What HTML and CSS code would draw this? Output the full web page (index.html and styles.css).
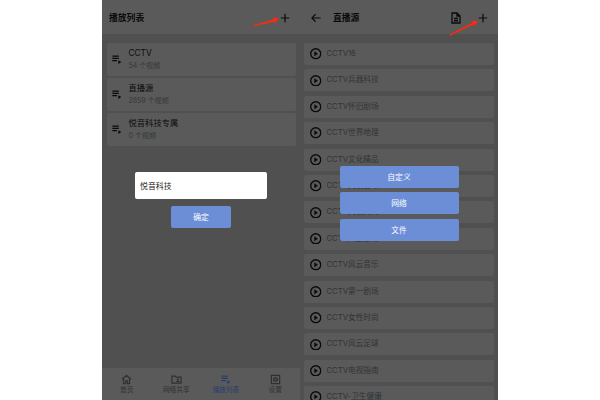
FILE: index.html
```html
<!DOCTYPE html>
<html lang="zh-CN">
<head>
    <meta charset="UTF-8">
    <title>播放列表</title>
    <link rel="stylesheet" href="styles.css">
</head>
<body>
    <svg class="sprite">
        <symbol id="queue" viewBox="0 0 24 24">
            <path d="M3 3h14v2.800H3zM3 8h14v2.800H3zM3 13h10v2.800H3zM16 13.500l6.500 4.200-6.500 4.200z"/>
        </symbol>
        <symbol id="play" viewBox="0 0 24 24">
            <circle cx="12" cy="12" r="10.500" fill="none" stroke="currentColor" stroke-width="2.800"/>
            <path d="M9 7v10l7.500-5z"/>
        </symbol>
        <symbol id="plus" viewBox="0 0 24 24">
            <path d="M10.600 2h2.800v8.600H22v2.800h-8.600V22h-2.800v-8.600H2v-2.800h8.600z"/>
        </symbol>
    </svg>

    <div class="phone">
        <div class="header">
            <h1>播放列表</h1>
            <svg class="icon-plus"><use href="#plus"/></svg>
        </div>
        <div class="playlists">
            <div class="playlist">
                <svg class="icon-queue"><use href="#queue"/></svg>
                <div>
                    <div class="name">CCTV</div>
                    <div class="count">54 个视频</div>
                </div>
            </div>
            <div class="playlist">
                <svg class="icon-queue"><use href="#queue"/></svg>
                <div>
                    <div class="name">直播源</div>
                    <div class="count">2859 个视频</div>
                </div>
            </div>
            <div class="playlist">
                <svg class="icon-queue"><use href="#queue"/></svg>
                <div>
                    <div class="name">悦音科技专属</div>
                    <div class="count">0 个视频</div>
                </div>
            </div>
        </div>
        <div class="tabs">
            <div class="tab">
                <svg viewBox="0 0 24 24"><path class="line" d="M2.500 11.500L12 3l9.500 8.500M5.500 9.500V21H10v-6h4v6h4.500V9.500"/></svg>
                <span>首页</span>
            </div>
            <div class="tab">
                <svg viewBox="0 0 24 24"><path class="line" d="M2 4.500h7l2 2.500h11v13H2z"/><circle cx="15" cy="11.500" r="2"/><path d="M11 17.500c0-4.500 8-4.500 8 0z"/></svg>
                <span>网络共享</span>
            </div>
            <div class="tab active">
                <svg><use href="#queue"/></svg>
                <span>播放列表</span>
            </div>
            <div class="tab">
                <svg viewBox="0 0 24 24"><path class="line" d="M3 3h18v18H3z"/><circle class="gear" cx="12" cy="12" r="3.200"/><path class="line" d="M12 6v2.500M12 15.500V18M6.800 9l2.200 1.300M15 13.700l2.200 1.300M6.800 15L9 13.700M15 10.300L17.200 9"/></svg>
                <span>设置</span>
            </div>
        </div>
        <div class="dialog">
            <input class="field" type="text" value="悦音科技">
            <button class="confirm">确定</button>
        </div>
        <svg class="arrow" viewBox="0 0 198 34"><path d="M151 25.300L171.500 19.500L170.800 17.700L177.300 18.300L173 23L172.200 21.700L151.200 26.400z"/></svg>
    </div>

    <div class="phone">
        <div class="header">
            <svg class="icon-back" viewBox="0 0 24 24"><path class="line" d="M23 12H3M11 3l-9 9 9 9"/></svg>
            <h1>直播源</h1>
            <svg class="icon-file" viewBox="0 0 24 24"><path class="line" d="M4 2h10l6 6v14H4zM14 2v6h6M8 13h8M8 17.500h8"/></svg>
            <svg class="icon-plus"><use href="#plus"/></svg>
        </div>
        <div class="channels">
            <div class="channel"><svg><use href="#play"/></svg><span>CCTV16</span></div>
            <div class="channel"><svg><use href="#play"/></svg><span>CCTV兵器科技</span></div>
            <div class="channel"><svg><use href="#play"/></svg><span>CCTV怀旧剧场</span></div>
            <div class="channel"><svg><use href="#play"/></svg><span>CCTV世界地理</span></div>
            <div class="channel"><svg><use href="#play"/></svg><span>CCTV文化精品</span></div>
            <div class="channel"><svg><use href="#play"/></svg><span>CCTV央视台球</span></div>
            <div class="channel"><svg><use href="#play"/></svg><span>CCTV央视高网</span></div>
            <div class="channel"><svg><use href="#play"/></svg><span>CCTV风云剧场</span></div>
            <div class="channel"><svg><use href="#play"/></svg><span>CCTV风云音乐</span></div>
            <div class="channel"><svg><use href="#play"/></svg><span>CCTV第一剧场</span></div>
            <div class="channel"><svg><use href="#play"/></svg><span>CCTV女性时尚</span></div>
            <div class="channel"><svg><use href="#play"/></svg><span>CCTV风云足球</span></div>
            <div class="channel"><svg><use href="#play"/></svg><span>CCTV电视指南</span></div>
            <div class="channel"><svg><use href="#play"/></svg><span>CCTV-卫生健康</span></div>
        </div>
        <div class="menu">
            <button>自定义</button>
            <button>网络</button>
            <button>文件</button>
        </div>
        <svg class="arrow" viewBox="0 0 198 34"><path d="M149.500 34.600L172.300 22.800L171.300 21.100L178.200 21L174 26.600L173 24.800L150 35.700z"/></svg>
    </div>
</body>
</html>
```
FILE: styles.css
```css
* {
    box-sizing: border-box;
    margin: 0;
    padding: 0;
}

body {
    display: flex;
    justify-content: center;
    height: 400px;
    overflow: hidden;
    background-color: #fff;
    font-family: Inter, "Noto Sans CJK SC", sans-serif;
    color: #0a0a0a;
}

.sprite {
    position: absolute;
    width: 0;
    height: 0;
}

svg {
    display: block;
    flex-shrink: 0;
    fill: currentColor;
}

.line {
    fill: none;
    stroke: currentColor;
    stroke-width: 2.6;
}

.phone {
    position: relative;
    display: flex;
    flex-direction: column;
    width: 198px;
    height: 400px;
    overflow: hidden;
    background-color: #505050;
}

/* top bar */
.header {
    display: flex;
    align-items: center;
    flex-shrink: 0;
    height: 34px;
    padding: 2px 10px 0 7px;
    background-color: #5a5a5a;
}

.header h1 {
    flex: 1;
    font-size: 8.8px;
    line-height: 14px;
    font-weight: 700;
}

.icon-plus {
    width: 10px;
    height: 10px;
}

.icon-back {
    width: 10px;
    height: 10px;
    margin: 0 12px 0 4px;
}

.icon-file {
    width: 12px;
    height: 12px;
    margin-right: 16px;
}

/* red pointer */
.arrow {
    position: absolute;
    top: 0;
    left: 0;
    width: 198px;
    height: 34px;
    overflow: visible;
    fill: #fc2a10;
}

/* playlists */
.playlists {
    flex: 1;
    display: flex;
    flex-direction: column;
    gap: 2.2px;
    padding: 9px 4px 0 4.5px;
}

.playlist {
    display: flex;
    align-items: center;
    height: 32.9px;
    padding-left: 4.5px;
    border-radius: 2px;
    background-color: #5a5a5a;
}

.icon-queue {
    width: 11px;
    height: 11px;
    margin-right: 6.5px;
}

.name {
    font-size: 8.3px;
    line-height: 13px;
}

.count {
    font-size: 7px;
    line-height: 12px;
    color: #34383b;
}

/* bottom tabs */
.tabs {
    display: flex;
    height: 32px;
    background-color: #5a5a5a;
}

.tab {
    flex: 1;
    display: flex;
    flex-direction: column;
    align-items: center;
    padding-top: 6px;
    font-size: 6.7px;
    line-height: 11px;
    color: #303030;
}

.tab svg {
    width: 11px;
    height: 11px;
}

.gear {
    fill: none;
    stroke: currentColor;
    stroke-width: 2.5;
}

.tab.active {
    color: #283e70;
}

/* name dialog */
.dialog {
    position: absolute;
    top: 172px;
    left: 33px;
    display: flex;
    flex-direction: column;
    align-items: center;
    gap: 6.5px;
    width: 132px;
}

.field {
    width: 132px;
    height: 27px;
    padding: 0 5px;
    border: none;
    border-radius: 2px;
    background-color: #fff;
    font-family: inherit;
    font-size: 7.9px;
    color: #222;
}

button {
    padding-bottom: 1px;
    border: none;
    border-radius: 2px;
    background-color: #6c8ed6;
    font-family: inherit;
    font-size: 7.8px;
    color: #fff;
}

.confirm {
    width: 60px;
    height: 22px;
}

/* channels */
.channels {
    display: flex;
    flex-direction: column;
    gap: 4.4px;
    padding: 9px 4.5px 0 4px;
}

.channel {
    display: flex;
    align-items: center;
    flex-shrink: 0;
    gap: 5px;
    height: 22px;
    padding-left: 6px;
    border-radius: 2px;
    background-color: #5a5a5a;
    font-size: 7.7px;
    line-height: 10px;
    color: #303437;
}

.channel svg {
    width: 11.5px;
    height: 11.5px;
    color: #0a0a0a;
}

/* source menu */
.menu {
    position: absolute;
    top: 166px;
    left: 39.5px;
    display: flex;
    flex-direction: column;
    gap: 4.4px;
    width: 119px;
}

.menu button {
    height: 22px;
}
```
